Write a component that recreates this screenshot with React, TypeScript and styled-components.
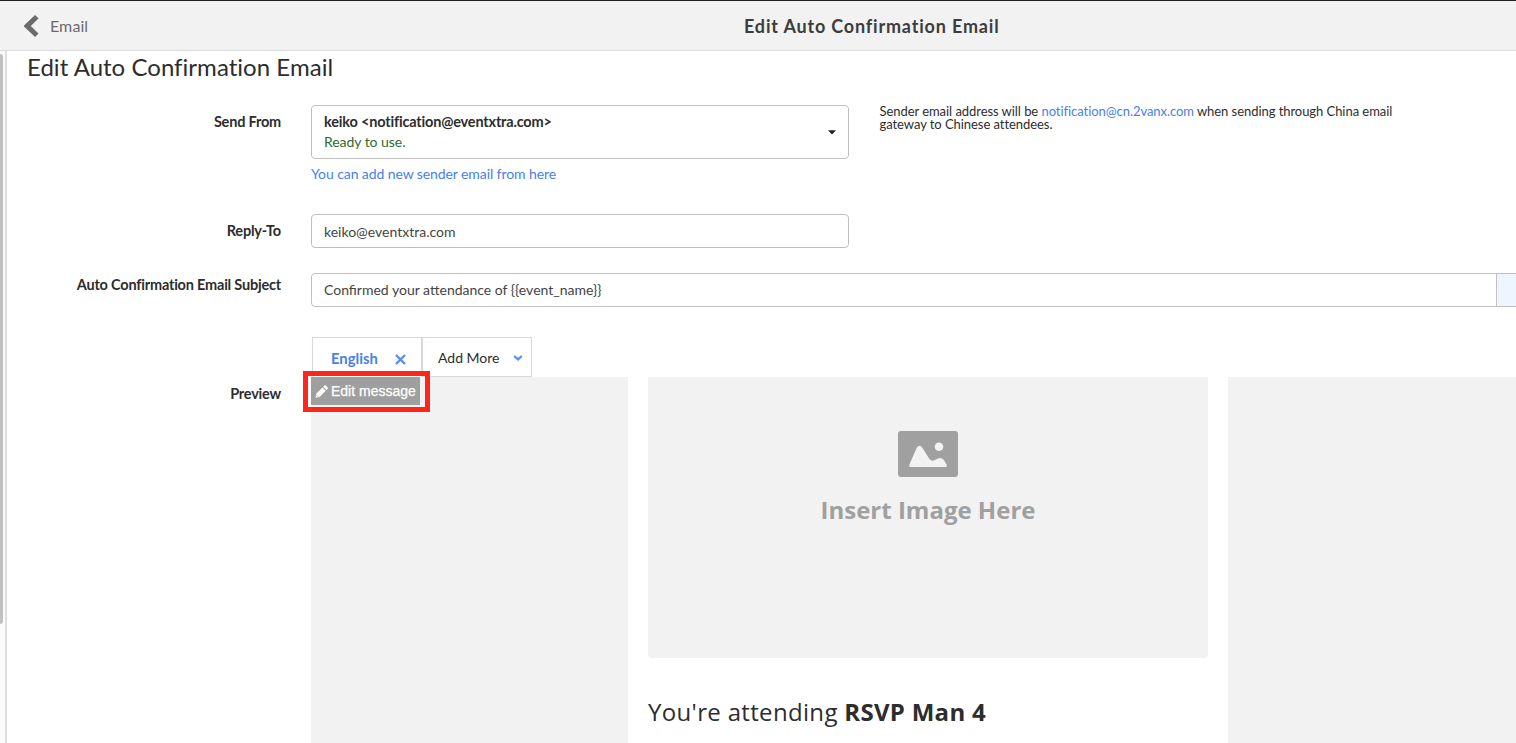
import React from "react";
import styled, { createGlobalStyle } from "styled-components";

const GlobalStyle = createGlobalStyle`
  * { box-sizing: border-box; }
  body { margin: 0; background: #fff; overflow: hidden; }
  a { text-decoration: none; color: #4680ef; }
`;

const Page = styled.div`
  width: 100vw;
  height: 100vh;
  display: flex;
  flex-direction: column;
  overflow: hidden;
  font-family: Lato, "Liberation Sans", sans-serif;
  font-size: 14px;
  color: #2d2d2d;
`;

const Header = styled.header`
  flex: none;
  height: 51px;
  display: grid;
  grid-template-columns: 744px auto;
  align-items: center;
  background: #f2f2f2;
  border-top: 1px solid #231f20;
  border-bottom: 1px solid #d9d9d9;
`;

const BackLink = styled.div`
  display: flex;
  align-items: center;
  padding-left: 24px;
  gap: 11px;
  font-size: 16px;
  line-height: 22px;
  letter-spacing: 0.1px;
  color: #6b6b6b;
  svg { display: block; }
`;

const HeaderTitle = styled.div`
  font-size: 18px;
  line-height: 24px;
  font-weight: 700;
  letter-spacing: 0.82px;
  color: #3d3d3d;
  white-space: nowrap;
`;

const Body = styled.div`
  flex: 1;
  min-height: 0;
  display: flex;
`;

const ScrollRail = styled.div`
  flex: none;
  width: 7px;
  padding-top: 3px;
  background: #fafafa;
  border-right: 2px solid #dedede;
`;

const ScrollThumb = styled.div`
  width: 3px;
  height: 570px;
  background: #c1c1c1;
  border-radius: 0 3px 3px 0;
`;

const Content = styled.main`
  flex: 1;
  min-width: 0;
  overflow: hidden;
`;

const PageTitle = styled.h1`
  margin: 0;
  padding: 1px 0 0 20px;
  height: 54px;
  font-size: 24px;
  line-height: 30px;
  font-weight: 400;
  letter-spacing: 0.03px;
`;

const FormRow = styled.div<{ $height: number }>`
  display: grid;
  grid-template-columns: 274px 1fr;
  column-gap: 30px;
  height: ${(p) => p.$height}px;
`;

const Label = styled.label<{ $top: number }>`
  padding-top: ${(p) => p.$top}px;
  text-align: right;
  font-size: 14.5px;
  font-weight: 700;
  letter-spacing: -0.2px;
  line-height: 18px;
`;

const SenderLine = styled.div`
  display: flex;
  gap: 30px;
`;

const SenderField = styled.div`
  width: 538px;
`;

const Select = styled.div`
  height: 54px;
  padding: 6px 12px 0;
  border: 1px solid #bfbfbf;
  border-radius: 4px;
  display: flex;
  justify-content: space-between;
  line-height: 20px;
  svg { margin-top: 18px; }
`;

const SenderName = styled.div`
  font-size: 14.5px;
  font-weight: 700;
  letter-spacing: -0.18px;
`;

const SenderStatus = styled.div`
  color: #2b6b33;
  letter-spacing: -0.05px;
`;

const AddSender = styled.a`
  display: block;
  margin-top: 6px;
  line-height: 18px;
  letter-spacing: -0.09px;
`;

const Note = styled.p`
  margin: 0;
  width: 530px;
  padding-left: 0.5px;
  font-size: 13px;
  line-height: 13px;
  letter-spacing: -0.055px;
`;

const TextInput = styled.div<{ $width: string; $top?: number; $flush?: boolean }>`
  width: ${(p) => p.$width};
  height: 34px;
  padding: ${(p) => p.$top ?? 0}px 12px 0;
  border: 1px solid #bfbfbf;
  border-radius: ${(p) => (p.$flush ? "4px 0 0 4px" : "4px")};
  line-height: 32px;
  color: #444;
`;

const InputGroup = styled.div`
  display: flex;
`;

const InputAddon = styled.div`
  flex: 1;
  height: 34px;
  background: #eff5ff;
  border: solid #bfbfbf;
  border-width: 1px 0;
`;

const Tabs = styled.div`
  display: flex;
  height: 40px;
  padding-left: 1px;
`;

const Tab = styled.div<{ $active?: boolean }>`
  display: flex;
  align-items: center;
  justify-content: space-between;
  width: 110px;
  padding: ${(p) => (p.$active ? "2px 15px 0 18px" : "1px 8px 0 15px")};
  border: 1px solid #d5d8de;
  border-bottom-color: ${(p) => (p.$active ? "transparent" : "#d5d8de")};
  color: ${(p) => (p.$active ? "#4680ef" : "#2d2d2d")};
  font-size: ${(p) => (p.$active ? "14.8px" : "14px")};
  font-weight: ${(p) => (p.$active ? 700 : 400)};
  svg { margin-top: ${(p) => (p.$active ? "3px" : "1px")}; }
`;

const Preview = styled.div`
  display: grid;
  grid-template-columns: 317px 600px 1fr;
  height: 366px;
  background: #f2f2f2;
`;

const PreviewSide = styled.div`
  position: relative;
`;

const EditButton = styled.button`
  display: flex;
  align-items: center;
  gap: 3px;
  width: 109px;
  height: 28px;
  padding: 0 4px;
  border: 0;
  background: #9f9f9f;
  color: #fff;
  font-family: "Liberation Sans", Arial, sans-serif;
  font-size: 14px;
  -webkit-text-stroke: 0.25px #fff;
  white-space: nowrap;
`;

const Highlight = styled.div`
  position: absolute;
  left: -8px;
  top: -6px;
  width: 127px;
  height: 41px;
  border: 5px solid #fe251b;
`;

const Mail = styled.div`
  padding: 0 20px;
  background: #fff;
  font-family: "Open Sans", sans-serif;
`;

const ImageSlot = styled.div`
  height: 281px;
  padding-top: 54px;
  display: flex;
  flex-direction: column;
  align-items: center;
  gap: 16px;
  background: #f2f2f2;
  border-radius: 0 0 4px 4px;
  color: #a0a0a0;
  font-size: 24px;
  line-height: 34px;
  font-weight: 700;
`;

const MailHeading = styled.div`
  margin-top: 37px;
  font-size: 24px;
  line-height: 34px;
  letter-spacing: 0.33px;
  white-space: nowrap;
  b { letter-spacing: 0.28px; }
`;

const BackIcon = () => (
  <svg width="15" height="24" viewBox="0 0 15 24">
    <path d="M12.8 2.8 3.2 12l9.6 9.2" fill="none" stroke="#6b6b6b" strokeWidth="5" />
  </svg>
);

const CaretIcon = () => (
  <svg width="8" height="5" viewBox="0 0 8 5">
    <path d="M0 .3h8L4 4.5z" fill="#222" />
  </svg>
);

const CloseIcon = () => (
  <svg width="11" height="11" viewBox="0 0 11 11">
    <path d="m1 1 9 9M10 1l-9 9" stroke="#5a8df0" strokeWidth="2.3" />
  </svg>
);

const ChevronIcon = () => (
  <svg width="10" height="6" viewBox="0 0 10 6">
    <path d="m1.2 1 3.8 3.4L8.8 1" fill="none" stroke="#5a8df0" strokeWidth="2.2" />
  </svg>
);

const PencilIcon = () => (
  <svg width="13" height="13" viewBox="0 0 13 13">
    <path
      d="M.5 12.7 1.2 8.7 7.5 2.4l3.3 3.3-6.3 6.3zM8.2 1.7 9.3.6q.8-.7 1.5 0l1.8 1.8q.7.7 0 1.500L11.5 5z"
      fill="#fff"
    />
    <path d="m1.5 10.3 1.4 1.4" stroke="#9f9f9f" strokeWidth=".9" />
  </svg>
);

const PictureIcon = () => (
  <svg width="60" height="46" viewBox="0 0 60 46">
    <rect width="60" height="46" rx="3" fill="#a0a0a0" />
    <circle cx="41" cy="15.7" r="4.3" fill="#f2f2f2" />
    <path
      d="M11.2 34 18.6 17Q21.5 12.5 24.5 17L31.5 28Q33.5 31 37 29Q44 24.7 46.5 30L48.8 34Q49.5 36 47.5 36H12.5Q10.5 36 11.2 34Z"
      fill="#f2f2f2"
    />
  </svg>
);

export default function App() {
  return (
    <Page>
      <GlobalStyle />
      <Header>
        <BackLink>
          <BackIcon />
          <span>Email</span>
        </BackLink>
        <HeaderTitle>Edit Auto Confirmation Email</HeaderTitle>
      </Header>
      <Body>
        <ScrollRail>
          <ScrollThumb />
        </ScrollRail>
        <Content>
          <PageTitle>Edit Auto Confirmation Email</PageTitle>
          <FormRow $height={109}>
            <Label $top={8}>Send From</Label>
            <SenderLine>
              <SenderField>
                <Select>
                  <div>
                    <SenderName>keiko &lt;notification@eventxtra.com&gt;</SenderName>
                    <SenderStatus>Ready to use.</SenderStatus>
                  </div>
                  <CaretIcon />
                </Select>
                <AddSender href="#">You can add new sender email from here</AddSender>
              </SenderField>
              <Note>
                Sender email address will be <a href="#">notification@cn.2vanx.com</a> when sending through China
                email gateway to Chinese attendees.
              </Note>
            </SenderLine>
          </FormRow>
          <FormRow $height={59}>
            <Label $top={8}>Reply-To</Label>
            <TextInput $width="538px" $top={1}>
              keiko@eventxtra.com
            </TextInput>
          </FormRow>
          <FormRow $height={64}>
            <Label $top={3}>Auto Confirmation Email Subject</Label>
            <InputGroup>
              <TextInput $width="1186px" $flush>
                Confirmed your attendance of {"{{event_name}}"}
              </TextInput>
              <InputAddon />
            </InputGroup>
          </FormRow>
          <FormRow $height={406}>
            <Label $top={48}>Preview</Label>
            <div>
              <Tabs>
                <Tab $active>
                  English
                  <CloseIcon />
                </Tab>
                <Tab>
                  Add More
                  <ChevronIcon />
                </Tab>
              </Tabs>
              <Preview>
                <PreviewSide>
                  <EditButton>
                    <PencilIcon />
                    Edit message
                  </EditButton>
                  <Highlight />
                </PreviewSide>
                <Mail>
                  <ImageSlot>
                    <PictureIcon />
                    <span>Insert Image Here</span>
                  </ImageSlot>
                  <MailHeading>
                    You're attending <b>RSVP Man 4</b>
                  </MailHeading>
                </Mail>
                <PreviewSide />
              </Preview>
            </div>
          </FormRow>
        </Content>
      </Body>
    </Page>
  );
}
